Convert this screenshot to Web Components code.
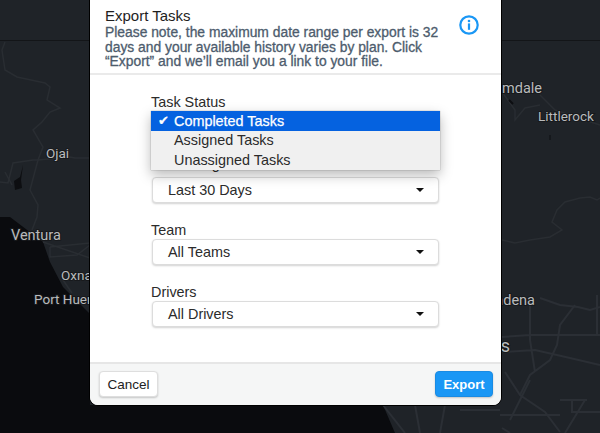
<!DOCTYPE html>
<html lang="en">
<head>
<meta charset="UTF-8">
<title>Export Tasks</title>
<style>
  html, body { margin: 0; height: 100%; background: #1f2328; overflow: hidden; }
  body { font-family: "Liberation Sans", Arial, sans-serif; font-size: 14px; }
</style>
<script>
  class DarkMap extends HTMLElement {
    constructor() {
      super();
      this.attachShadow({ mode: 'open' }).innerHTML = `
        <style>
          :host { display: block; position: absolute; inset: 0; overflow: hidden; background: #1f2328; }
          svg { display: block; }
          .road { fill: none; stroke: #2b2f35; stroke-width: 2; }
          .thin { fill: none; stroke: #292d32; stroke-width: 1.5; }
          text { font-family: Roboto, "Liberation Sans", sans-serif; font-size: 13.5px; fill: #b9bbbd; stroke: #17191c; stroke-width: 2px; paint-order: stroke; }
          .big { font-size: 14.5px; }
        </style>
        <svg width="600" height="433" viewBox="0 0 600 433">
          <path d="M0 217 L10 217 L43 242 L50 262 L63 287 L90 314 L90 405 L383 405 L395 433 L0 433 Z" fill="#0a0b0e"/>
          <path d="M0 40.5 H600" stroke="#131518" stroke-width="1"/>
          <path class="thin" d="M5 42 L2 50 L5 70 L17 77 L45 83 L50 87 L47 100 L60 108 L50 112 L42 122 L33 130 L43 147 L38 160 L30 190 L38 205 L37 217 L32 230"/>
          <path class="thin" d="M0 182 L8 183 L13 163 L33 160 L38 160 L70 157 L75 158 L90 158"/>
          <path class="thin" d="M5 172 L12 185 M43 242 L90 258"/>
          <path class="thin" d="M50 247 L90 243 M50 247 V257 L77 255 L90 245 M63 280 L72 293"/>
          <path class="thin" d="M502 92 L515 110 L515 120 L525 108 L540 105 M540 95 L555 110 L600 125"/>
          <path class="thin" d="M502 240 L515 243 L530 240 L550 237 L562 230 L552 222 L557 210 L565 202 L580 198 L590 197 L597 200 L600 198"/>
          <path class="road" d="M540 298 L560 305 L578 307 L590 310 L600 307 M530 300 L530 340 L535 372 M575 305 L560 325 L557 345 L550 360 L530 375 L520 395 M502 337 L530 335 L600 335 M502 352 L535 350 L570 358 L600 365 M597 295 V335"/>
          <path class="road" d="M505 372 L520 395 L545 412 L560 432 M530 380 L510 420 M500 415 L560 415 M560 400 H587 M572 400 V412 H600 M585 400 L565 433 M502 428 L510 433"/>
          <path class="road" d="M383 405 L405 433 M415 405 L420 433 M445 405 L440 433 M460 410 H500"/>
          <path d="M14 181 L20 177 L23 165 L21 180 L22 188 L15 190 Z" fill="#0d0e11"/>
          <path d="M509 100 L513 104" stroke="#0d0e11" stroke-width="2"/>
          <path d="M550 135 V140" stroke="#0d0e11" stroke-width="1"/>
          <text x="46" y="158">Ojai</text>
          <text class="big" x="11" y="240">Ventura</text>
          <text x="61" y="280">Oxnard</text>
          <text x="34" y="304">Port Hueneme</text>
          <text class="big" x="542" y="93" text-anchor="end">Palmdale</text>
          <text x="538" y="121">Littlerock</text>
          <text class="big" x="535" y="305" text-anchor="end">Pasadena</text>
          <text x="510" y="352" text-anchor="end" style="font-size:18px">Los Angeles</text>
        </svg>`;
    }
  }

  class InfoIcon extends HTMLElement {
    constructor() {
      super();
      this.attachShadow({ mode: 'open' }).innerHTML = `
        <style>:host { display: block; width: 20px; height: 20px; } svg { display: block; }</style>
        <svg width="20" height="20" viewBox="0 0 20 20">
          <circle cx="10" cy="10" r="8.7" fill="none" stroke="#1a97f5" stroke-width="2.2"/>
          <circle cx="10" cy="6" r="1.3" fill="#1a97f5"/>
          <rect x="8.9" y="8.4" width="2.2" height="6.4" fill="#1a97f5"/>
        </svg>`;
    }
  }

  class FormSelect extends HTMLElement {
    constructor() {
      super();
      this.attachShadow({ mode: 'open' }).innerHTML = `
        <style>
          :host { display: block; position: relative; }
          label { display: block; height: 20px; margin-left: -1px; line-height: var(--label-lh, 22px); color: #2b2b2b; font-size: 14.4px; }
          .box { box-sizing: border-box; height: 26px; display: flex; align-items: center; justify-content: space-between;
            padding: 0 14px 0 15px; background: #fff; border: 1px solid #dcdcdc; border-radius: 4px;
            box-shadow: 0 1px 2px rgba(0,0,0,.18); color: #2b2b2b; font-size: 14.4px; }
          .caret { width: 0; height: 0; border-left: 4.5px solid transparent; border-right: 4.5px solid transparent; border-top: 4px solid #111; }
        </style>
        <label><slot name="label"></slot></label>
        <div class="box"><span><slot></slot></span><span class="caret"></span></div>
        <slot name="menu"></slot>`;
    }
  }

  class DropMenu extends HTMLElement {
    constructor() {
      super();
      this.attachShadow({ mode: 'open' }).innerHTML = `
        <style>
          :host { display: block; position: absolute; left: -1px; right: -1px; top: 16px; box-sizing: border-box; height: 59px;
            background: #f0f0f0; box-shadow: 0 0 1px rgba(0,0,0,.45), 0 5px 12px rgba(0,0,0,.28); font-size: 14.4px; color: #2b2b2b; z-index: 2; }
          slot { display: block; }
        </style>
        <slot></slot>`;
    }
  }

  class MenuItem extends HTMLElement {
    constructor() {
      super();
      this.attachShadow({ mode: 'open' }).innerHTML = `
        <style>
          :host { display: flex; align-items: center; height: 19.5px; padding-left: 23px; position: relative; }
          :host([selected]) { background: #0562e0; color: #fff; -webkit-text-stroke: .25px #fff; }
          .check { position: absolute; left: 7px; top: 0; line-height: 19.5px; font-family: "DejaVu Sans", sans-serif; font-size: 13px; display: none; }
          :host([selected]) .check { display: block; }
        </style>
        <span class="check">✔</span><slot></slot>`;
    }
  }

  class ActionButton extends HTMLElement {
    constructor() {
      super();
      this.attachShadow({ mode: 'open' }).innerHTML = `
        <style>
          :host { display: flex; align-items: center; justify-content: center; box-sizing: border-box; width: 59px; height: 26px; border-radius: 4px;
            background: #fff; border: 1px solid #dedede; box-shadow: 0 1px 2px rgba(0,0,0,.2); color: #222; font-size: 13.5px; }
          :host([primary]) { width: 58px; background: #1a97f5; border-color: #1a8be3; color: #fff; font-weight: bold; font-size: 13px; }
        </style>
        <slot></slot>`;
    }
  }

  class ExportModal extends HTMLElement {
    constructor() {
      super();
      this.attachShadow({ mode: 'open' }).innerHTML = `
        <style>
          :host { display: flex; flex-direction: column; box-sizing: border-box; position: relative; width: 411px; height: 405px; margin-left: 90px;
            background: #fff; border-radius: 0 0 8px 8px; box-shadow: 0 0 0 1px #000; }
          header { box-sizing: border-box; height: 75px; padding: 8px 22px 0 15px; display: flex; justify-content: space-between; border-bottom: 2px solid #eaeaea; }
          .title { font-size: 15px; line-height: 16px; margin-bottom: 1px; color: #1e1e1e; }
          .note { font-size: 13.85px; line-height: 14.7px; color: #4d5c6d; -webkit-text-stroke: .3px #4d5c6d; width: 345px; }
          .info { padding-top: 7px; }
          main { flex: 1; padding: 20px 62px 0 62px; display: flex; flex-direction: column; gap: 16px; }
          footer { box-sizing: border-box; height: 43px; background: #f5f6f6; border-top: 2px solid #e6e6e6; border-radius: 0 0 8px 8px;
            padding: 7px 8px 0 9px; display: flex; justify-content: space-between; align-items: flex-start; }
        </style>
        <header>
          <div>
            <div class="title"><slot name="title"></slot></div>
            <div class="note"><slot name="note"></slot></div>
          </div>
          <div class="info"><slot name="info"></slot></div>
        </header>
        <main><slot></slot></main>
        <footer><slot name="cancel"></slot><slot name="submit"></slot></footer>`;
    }
  }

  customElements.define('dark-map', DarkMap);
  customElements.define('info-icon', InfoIcon);
  customElements.define('form-select', FormSelect);
  customElements.define('drop-menu', DropMenu);
  customElements.define('menu-item', MenuItem);
  customElements.define('action-button', ActionButton);
  customElements.define('export-modal', ExportModal);
</script>
</head>
<body>
  <dark-map></dark-map>
  <export-modal>
    <span slot="title">Export Tasks</span>
    <span slot="note">Please note, the maximum date range per export is 32 days and your available history varies by plan. Click “Export” and we’ll email you a link to your file.</span>
    <info-icon slot="info"></info-icon>

    <form-select style="--label-lh:14px; z-index:2">
      <span slot="label">Task Status</span>
      <drop-menu slot="menu">
        <menu-item selected>Completed Tasks</menu-item>
        <menu-item>Assigned Tasks</menu-item>
        <menu-item>Unassigned Tasks</menu-item>
      </drop-menu>
    </form-select>
    <form-select style="--label-lh:14px"><span slot="label">Date Range</span>Last 30 Days</form-select>
    <form-select><span slot="label">Team</span>All Teams</form-select>
    <form-select><span slot="label">Drivers</span>All Drivers</form-select>

    <action-button slot="cancel">Cancel</action-button>
    <action-button slot="submit" primary>Export</action-button>
  </export-modal>
</body>
</html>
